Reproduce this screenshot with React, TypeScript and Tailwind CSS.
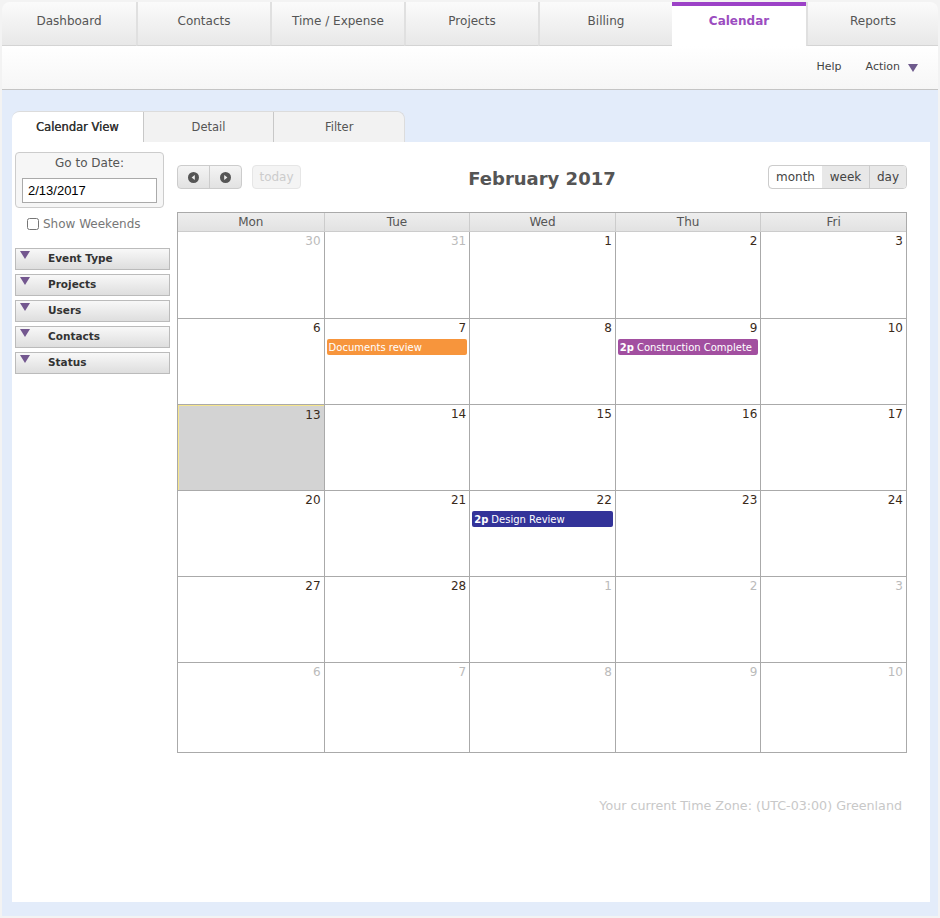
import { useState } from "react";

const navTabs = [
  "Dashboard",
  "Contacts",
  "Time / Expense",
  "Projects",
  "Billing",
  "Calendar",
  "Reports",
];

const filters = ["Event Type", "Projects", "Users", "Contacts", "Status"];

type Ev = { time?: string; title: string; color: string };
type Day = { n: number; other?: boolean; today?: boolean; events?: Ev[] };

const weeks: Day[][] = [
  [{ n: 30, other: true }, { n: 31, other: true }, { n: 1 }, { n: 2 }, { n: 3 }],
  [
    { n: 6 },
    { n: 7, events: [{ title: "Documents review", color: "bg-[#f7953c]" }] },
    { n: 8 },
    {
      n: 9,
      events: [{ time: "2p", title: "Construction Complete", color: "bg-[#a24fa0]" }],
    },
    { n: 10 },
  ],
  [{ n: 13, today: true }, { n: 14 }, { n: 15 }, { n: 16 }, { n: 17 }],
  [
    { n: 20 },
    { n: 21 },
    { n: 22, events: [{ time: "2p", title: "Design Review", color: "bg-[#333399]" }] },
    { n: 23 },
    { n: 24 },
  ],
  [{ n: 27 }, { n: 28 }, { n: 1, other: true }, { n: 2, other: true }, { n: 3, other: true }],
  [
    { n: 6, other: true },
    { n: 7, other: true },
    { n: 8, other: true },
    { n: 9, other: true },
    { n: 10, other: true },
  ],
];

function Triangle({ className }: { className: string }) {
  return (
    <svg width="10" height="8" viewBox="0 0 10 8" className={className}>
      <path d="M0 0 L10 0 L5 8 Z" fill="currentColor" />
    </svg>
  );
}

function NavArrow({ dir }: { dir: "l" | "r" }) {
  return (
    <svg width="11" height="11" viewBox="0 0 11 11">
      <circle cx="5.5" cy="5.5" r="5.5" fill="#555" />
      {dir === "l" ? (
        <path d="M6.8 3 L3.6 5.5 L6.8 8 Z" fill="#eee" />
      ) : (
        <path d="M4.2 3 L7.4 5.5 L4.2 8 Z" fill="#eee" />
      )}
    </svg>
  );
}

export default function App() {
  const [weekends, setWeekends] = useState(false);

  return (
    <div className="w-[940px] h-[918px] bg-[#f3f3f3] p-[2px] font-['DejaVu_Sans',sans-serif] text-[12px] text-[#555]">
      <div className="rounded-t-[8px] overflow-hidden">
        <div className="flex h-[44px]">
          {navTabs.map((t, i) =>
            t === "Calendar" ? (
              <div
                key={t}
                className="w-[134px] shrink-0 bg-white border-t-[4px] border-[#9c42c7] flex justify-center pt-[6px] font-bold text-[#9b4dc0]"
              >
                {t}
              </div>
            ) : (
              <div
                key={t}
                className={`${i === 6 ? "flex-1" : "w-[134px] shrink-0"} bg-linear-to-b from-[#fbfbfb] to-[#e8e8e8] border-b border-[#d4d4d4] flex justify-center pt-[10px] ${
                  i > 0 ? "border-l-2 border-l-[#e0e0e0]" : ""
                }`}
              >
                {t}
              </div>
            )
          )}
        </div>
        <div className="h-[44px] bg-linear-to-b from-white to-[#f6f6f6] border-b border-[#c4c4c4] flex items-center justify-end pr-[20px] gap-[24px] text-[11px] text-[#444]">
          <span>Help</span>
          <span className="flex items-center gap-[8px]">
            Action
            <Triangle className="text-[#6e5a8c]" />
          </span>
        </div>
      </div>

      <div className="bg-[#e3ecfa] pl-[10px] pr-[8px] pt-[21px] pb-[14px]">
        <div className="flex h-[31px] w-[393px] rounded-t-[8px] overflow-hidden border-t border-r border-[#dcdcdc]">
          <div className="w-[131px] bg-white flex items-center justify-center pt-[2px] text-[#333] text-[11.5px] [text-shadow:0.3px_0_0_#333]">
            Calendar View
          </div>
          <div className="w-[131px] bg-[#f2f2f2] border-l border-[#c8c8c8] flex items-center justify-center pt-[2px] text-[11.5px]">
            Detail
          </div>
          <div className="w-[131px] bg-[#f2f2f2] border-l border-[#c8c8c8] flex items-center justify-center pt-[2px] text-[11.5px]">
            Filter
          </div>
        </div>

        <div className="bg-white h-[760px] flex">
          <div className="w-[155px] ml-[3px] mt-[10px] shrink-0">
            <div className="w-[149px] h-[56px] rounded-[4px] border border-[#ccc] bg-[#f6f6f6] flex flex-col items-center pt-[1px]">
              <span>Go to Date:</span>
              <input
                defaultValue="2/13/2017"
                className="mt-[6px] w-[135px] h-[25px] border border-[#aaa] bg-white px-[5px] font-['Liberation_Sans',sans-serif] text-[13px] text-black outline-none"
              />
            </div>
            <label className="flex items-center gap-[4px] ml-[12px] mt-[7px] text-[#777]">
              <input
                type="checkbox"
                checked={weekends}
                onChange={() => setWeekends(!weekends)}
                className="w-[12px] h-[12px]"
              />
              Show Weekends
            </label>
            <div className="mt-[15px] flex flex-col gap-[4px]">
              {filters.map((f) => (
                <div
                  key={f}
                  className="h-[22px] border border-[#bbb] bg-linear-to-b from-[#f8f8f8] to-[#dedede] flex items-start"
                >
                  <Triangle className="text-[#73578f] ml-[4px] mt-[2px]" />
                  <span className="ml-[18px] mt-[2px] text-[10.5px] font-bold text-[#333]">
                    {f}
                  </span>
                </div>
              ))}
            </div>
          </div>

          <div className="ml-[7px] w-[730px] mt-[23px]">
            <div className="grid grid-cols-[1fr_auto_1fr] items-center h-[24px]">
              <div className="flex items-center gap-[10px]">
                <div className="flex h-[24px] rounded-[4px] border border-[#ccc] bg-linear-to-b from-[#f4f4f4] to-[#e2e2e2]">
                  <button className="w-[31px] flex items-center justify-center">
                    <NavArrow dir="l" />
                  </button>
                  <button className="w-[32px] border-l border-[#ccc] flex items-center justify-center">
                    <NavArrow dir="r" />
                  </button>
                </div>
                <button className="h-[24px] w-[49px] rounded-[4px] border border-[#e6e6e6] bg-[#f4f4f4] text-[#ccc]">
                  today
                </button>
              </div>
              <h2 className="relative top-[2px] text-[18px] leading-[24px] font-bold text-[#555]">
                February 2017
              </h2>
              <div className="justify-self-end flex h-[24px] rounded-[4px] border border-[#ccc] overflow-hidden text-[#444]">
                <span className="w-[55px] bg-white border border-[#aaa] rounded-l-[4px] -m-px flex items-center justify-center">
                  month
                </span>
                <span className="w-[47px] bg-[#e8e8e8] flex items-center justify-center">
                  week
                </span>
                <span className="w-[37px] bg-[#e8e8e8] border-l border-[#ccc] flex items-center justify-center">
                  day
                </span>
              </div>
            </div>

            <div className="mt-[23px] border border-[#aaa]">
              <div className="grid grid-cols-5 h-[19px] bg-linear-to-b from-[#eee] to-[#e2e2e2] border-b border-[#ccc]">
                {["Mon", "Tue", "Wed", "Thu", "Fri"].map((d, i) => (
                  <div
                    key={d}
                    className={`flex items-center justify-center ${i > 0 ? "border-l border-[#ccc]" : ""}`}
                  >
                    {d}
                  </div>
                ))}
              </div>
              {weeks.map((w, r) => (
                <div
                  key={r}
                  className={`grid grid-cols-5 ${r === 5 ? "h-[90px]" : "h-[86px]"} ${
                    r > 0 ? "border-t border-[#aaa]" : ""
                  }`}
                >
                  {w.map((d, c) => (
                    <div
                      key={c}
                      className={`flex flex-col ${c > 0 ? "border-l border-[#aaa]" : ""} ${
                        d.today ? "bg-[#d3d3d3] border-t border-l border-t-[#f6e58d] border-l-[#f6e58d]" : ""
                      }`}
                    >
                      <div
                        className={`text-right pr-[3px] text-[12px] ${
                          d.other ? "text-[#bbb]" : "text-[#3a2a1a]"
                        }`}
                      >
                        {d.n}
                      </div>
                      {d.events?.map((e) => (
                        <div
                          key={e.title}
                          className={`${e.color} mx-[2px] mt-[2px] h-[16px] rounded-[2px] text-white text-[10px] flex items-center px-[2px] whitespace-nowrap overflow-hidden`}
                        >
                          {e.time && <b className="mr-[3px]">{e.time}</b>}
                          {e.title}
                        </div>
                      ))}
                    </div>
                  ))}
                </div>
              ))}
            </div>

            <div className="mt-[43px] text-right pr-[5px] text-[12.7px] text-[#c8c8c8]">
              Your current Time Zone: (UTC-03:00) Greenland
            </div>
          </div>
        </div>
      </div>
    </div>
  );
}
